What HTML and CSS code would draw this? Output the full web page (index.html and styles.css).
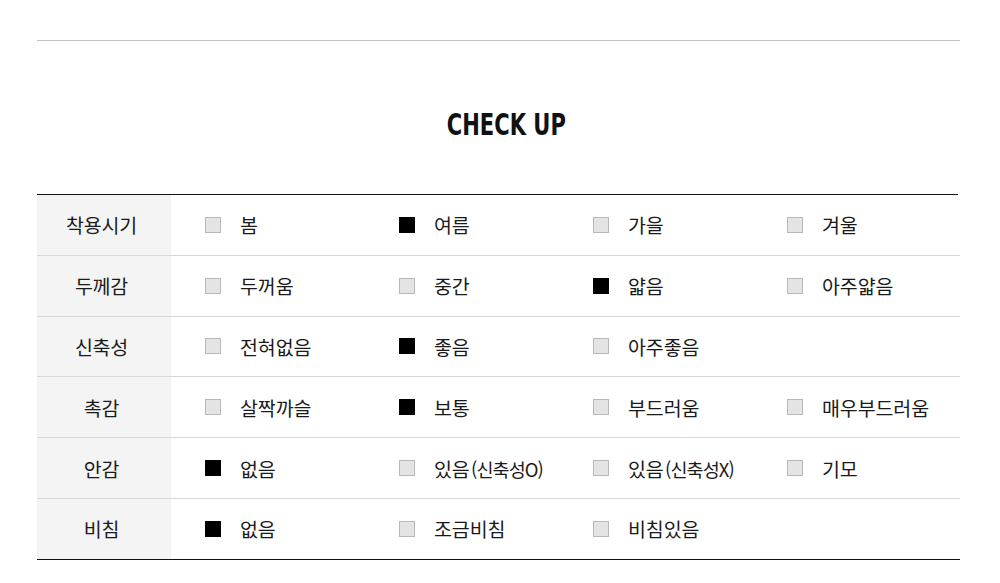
FILE: index.html
```html
<!DOCTYPE html>
<html lang="ko">
<head>
<meta charset="utf-8">
<title>CHECK UP</title>
<link rel="stylesheet" href="styles.css">
</head>
<body>
<div class="page">
  <div class="top-rule"></div>
  <div class="title-wrap"><h2 class="title">CHECK UP</h2></div>
  <div class="checkup">
    <div class="row">
      <div class="head">착용시기</div>
      <div class="opt"><span class="box"></span><span class="label">봄</span></div>
      <div class="opt"><span class="box on"></span><span class="label">여름</span></div>
      <div class="opt"><span class="box"></span><span class="label">가을</span></div>
      <div class="opt"><span class="box"></span><span class="label">겨울</span></div>
    </div>
    <div class="row">
      <div class="head">두께감</div>
      <div class="opt"><span class="box"></span><span class="label">두꺼움</span></div>
      <div class="opt"><span class="box"></span><span class="label">중간</span></div>
      <div class="opt"><span class="box on"></span><span class="label">얇음</span></div>
      <div class="opt"><span class="box"></span><span class="label">아주얇음</span></div>
    </div>
    <div class="row">
      <div class="head">신축성</div>
      <div class="opt"><span class="box"></span><span class="label">전혀없음</span></div>
      <div class="opt"><span class="box on"></span><span class="label">좋음</span></div>
      <div class="opt"><span class="box"></span><span class="label">아주좋음</span></div>
    </div>
    <div class="row">
      <div class="head">촉감</div>
      <div class="opt"><span class="box"></span><span class="label">살짝까슬</span></div>
      <div class="opt"><span class="box on"></span><span class="label">보통</span></div>
      <div class="opt"><span class="box"></span><span class="label">부드러움</span></div>
      <div class="opt"><span class="box"></span><span class="label">매우부드러움</span></div>
    </div>
    <div class="row">
      <div class="head">안감</div>
      <div class="opt"><span class="box on"></span><span class="label">없음</span></div>
      <div class="opt"><span class="box"></span><span class="label">있음 <span class="small">(신축성O)</span></span></div>
      <div class="opt"><span class="box"></span><span class="label">있음 <span class="small">(신축성X)</span></span></div>
      <div class="opt"><span class="box"></span><span class="label">기모</span></div>
    </div>
    <div class="row last">
      <div class="head">비침</div>
      <div class="opt"><span class="box on"></span><span class="label">없음</span></div>
      <div class="opt"><span class="box"></span><span class="label">조금비침</span></div>
      <div class="opt"><span class="box"></span><span class="label">비침있음</span></div>
    </div>
  </div>
</div>
</body>
</html>
```
FILE: styles.css
```css
html, body {
  margin: 0;
  padding: 0;
  background: #fff;
}
body {
  font-family: "Noto Sans CJK KR", "Noto Sans", sans-serif;
  color: #1a1a1a;
}
.page {
  padding: 40px 0 0 37px;
  width: 923px;
}
.top-rule {
  height: 1px;
  background: #c4c4c4;
}
.title-wrap {
  height: 153px;
  display: flex;
  justify-content: center;
  align-items: flex-start;
}
.title {
  margin: 67px 0 0 15px;
  font-family: "DejaVu Sans Condensed", "DejaVu Sans", sans-serif;
  font-weight: bold;
  font-size: 30px;
  line-height: 34px;
  color: #111;
  display: inline-block;
  transform: scaleX(0.78);
  letter-spacing: 0;
}
.checkup {
  border-top: 1px solid #111;
  width: 921px;
}
.row {
  display: grid;
  grid-template-columns: 134px 194px 194px 194px 194px;
  height: 59.8px;
  border-bottom: 1px solid #d8d8d8;
  width: 923px;
}
.row.last {
  border-bottom-color: #111;
}
.head {
  background: #f4f4f4;
  display: flex;
  align-items: center;
  justify-content: center;
  padding-right: 5px;
  font-size: 19.5px;
  letter-spacing: -0.2px;
}
.opt {
  display: flex;
  align-items: center;
  padding-left: 34px;
}
.box {
  width: 16px;
  height: 16px;
  box-sizing: border-box;
  background: #e4e4e4;
  border: 1px solid #b8b8b8;
  flex: none;
}
.box.on {
  background: #000;
  border-color: #000;
}
.label {
  margin-left: 19px;
  font-size: 19.5px;
  letter-spacing: -0.1px;
  white-space: nowrap;
}
.small {
  font-size: 18.5px;
  letter-spacing: -0.9px;
  margin-left: -4px;
}
```
